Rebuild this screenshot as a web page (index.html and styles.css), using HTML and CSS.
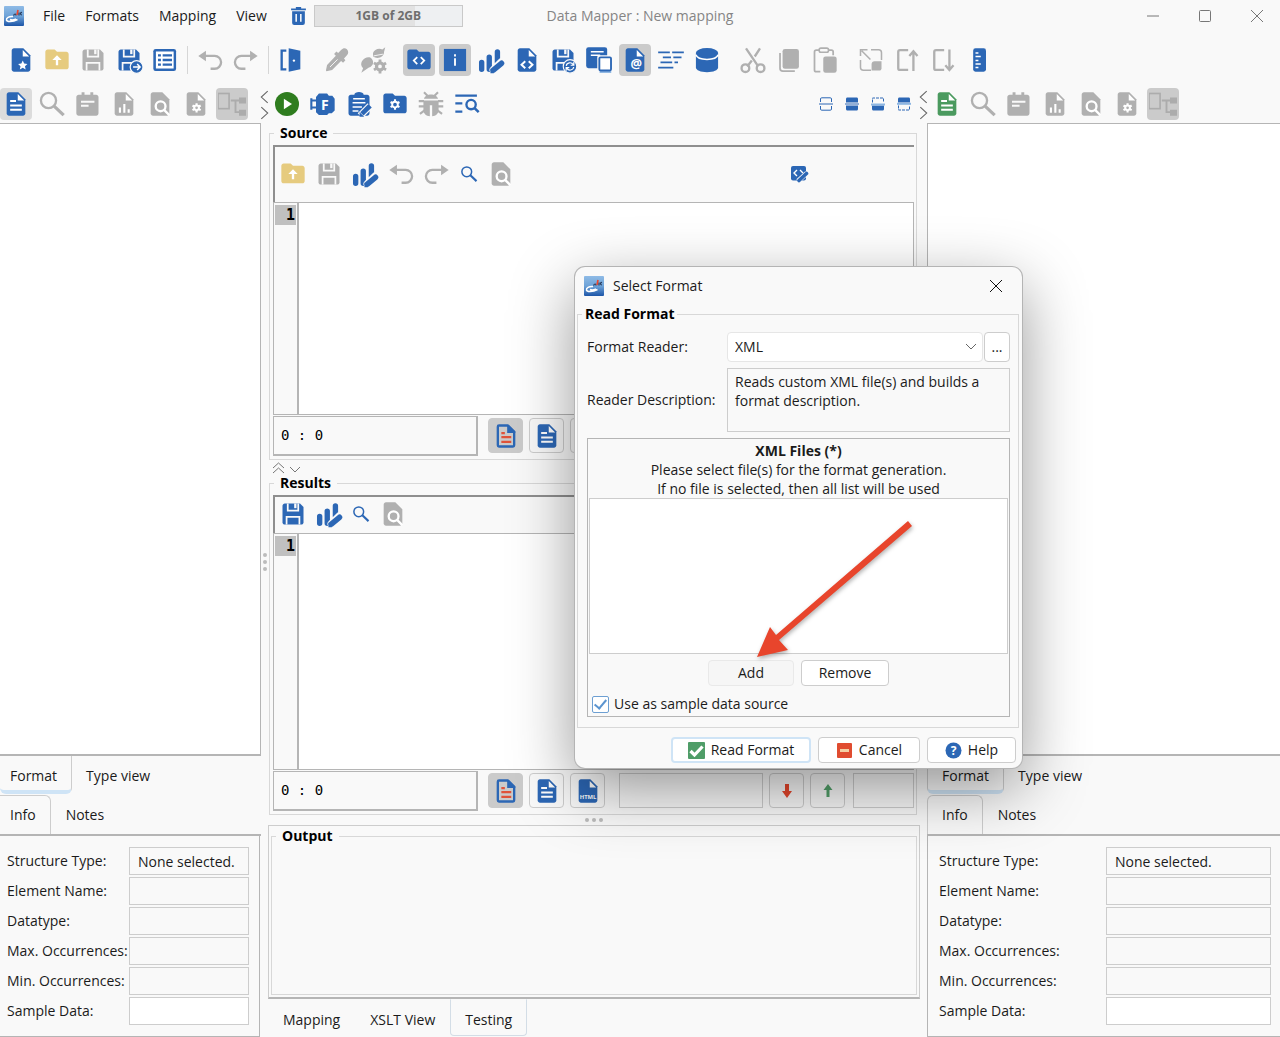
FILE: index.html
```html
<!DOCTYPE html>
<html lang="en">
<head>
    <meta charset="UTF-8">
    <meta name="viewport" content="width=device-width, initial-scale=1.0">
    <title>Data Mapper : New mapping</title>
    <link rel="stylesheet" href="styles.css">
</head>
<body>
    <!-- Icon sprite -->
    <svg class="sprite" aria-hidden="true">
        <defs>
            <linearGradient id="sky" x1="0" y1="0" x2="0" y2="1">
                <stop offset="0" stop-color="#8fbbe6"/>
                <stop offset=".5" stop-color="#6ea3d8"/>
                <stop offset="1" stop-color="#1d56a8"/>
            </linearGradient>
        </defs>
        <symbol id="logo" viewBox="0 0 20 20">
            <rect width="20" height="20" rx="1" fill="url(#sky)"/>
            <path d="M9 10.500c-4-.5-7 1.500-6.500 3.500s6 2 11-.5M6 13.500c1.500.8 4 .5 6-.5" fill="none" stroke="#fff" stroke-width="1.500"/>
            <path d="M9.500 9.500c1-2 2.500-2 2.500 0M15 6.500v3M18 6.500c-2-.5-2 2.500 0 2.500" fill="none" stroke="#2b3c5c" stroke-width="1.200"/>
            <path d="M14 4l-1 5" stroke="#e8452c" stroke-width="1.600"/>
        </symbol>
        <symbol id="trash" viewBox="0 0 14 17">
            <path d="M4.500 0h5v1.500H14V3H0V1.500h4.500zM1 4h12v11a2 2 0 0 1-2 2H3a2 2 0 0 1-2-2z" fill="currentColor"/>
            <path d="M4.800 6.500v7.500M9.200 6.500v7.500" stroke="#fff" stroke-width="1.400"/>
        </symbol>
        <symbol id="doc" viewBox="0 0 24 24">
            <path d="M14 2H6c-1.100 0-2 .9-2 2v16c0 1.100.9 2 2 2h12c1.100 0 2-.9 2-2V8z" fill="currentColor"/>
            <path d="M13.500 3.500V9H19z" fill="#fff"/>
        </symbol>
        <symbol id="doc-star" viewBox="0 0 24 24">
            <use href="#doc"/>
            <path d="M13.500 12.500l1.200 2.600 2.800.3-2.100 1.900.6 2.800-2.500-1.400-2.500 1.400.6-2.800-2.100-1.900 2.800-.3z" fill="#fff"/>
        </symbol>
        <symbol id="folder" viewBox="0 0 24 24">
            <path d="M10 3H4c-1.100 0-2 .9-2 2v13c0 1.100.9 2 2 2h16c1.100 0 2-.9 2-2V7c0-1.100-.9-2-2-2h-8z" fill="currentColor"/>
        </symbol>
        <symbol id="folder-up" viewBox="0 0 24 24">
            <use href="#folder"/>
            <path d="M12 8l4 4h-3v4.500h-2V12H8z" fill="#fff"/>
        </symbol>
        <symbol id="save" viewBox="0 0 24 24">
            <path d="M5 3h13l3 3v13c0 1.100-.9 2-2 2H5c-1.100 0-2-.9-2-2V5c0-1.100.9-2 2-2z" fill="currentColor"/>
            <path d="M7.500 3v6h9V3M6.500 21v-6.500h11V21" fill="none" stroke="#f9f9f9" stroke-width="1.500"/>
            <path d="M13 3h2v4h-2z" fill="#f9f9f9"/>
        </symbol>
        <symbol id="save-as" viewBox="0 0 24 24">
            <use href="#save"/>
            <circle cx="18.500" cy="18" r="5.500" fill="currentColor" stroke="#f9f9f9"/>
            <path d="M15.500 18h6M19 15.500l2.500 2.500-2.500 2.500" fill="none" stroke="#fff" stroke-width="1.300"/>
        </symbol>
        <symbol id="save-sync" viewBox="0 0 24 24">
            <use href="#save"/>
            <circle cx="18" cy="17.500" r="5.800" fill="currentColor" stroke="#f9f9f9"/>
            <path d="M14.800 17c.5-3 4.500-3.500 6-1M21.200 18c-.5 3-4.500 3.500-6 1M21.300 13.800v2.700h-2.700M14.700 21.200v-2.700h2.700" fill="none" stroke="#fff"/>
        </symbol>
        <symbol id="list-box" viewBox="0 0 24 24">
            <rect x="2" y="2.500" width="19.500" height="19" rx="2" fill="currentColor"/>
            <rect x="4.200" y="4.700" width="15.200" height="14.600" fill="#fff"/>
            <path d="M6 8h2.500M6 12h2.500M6 16h2.500M10 8h8M10 12h8M10 16h8" stroke="currentColor" stroke-width="2"/>
        </symbol>
        <symbol id="undo" viewBox="0 0 24 24">
            <path d="M5 8.500h11a5 5 0 0 1 0 11h-3.500" fill="none" stroke="currentColor" stroke-width="2"/>
            <path d="M8.500 4L2 8.500 8.500 13z" fill="currentColor"/>
        </symbol>
        <symbol id="redo" viewBox="0 0 24 24">
            <path d="M19 8.500H8a5 5 0 0 0 0 11h3.500" fill="none" stroke="currentColor" stroke-width="2"/>
            <path d="M15.500 4L22 8.500 15.500 13z" fill="currentColor"/>
        </symbol>
        <symbol id="door" viewBox="0 0 24 24">
            <path d="M10 2l10 2v16l-10 2z" fill="currentColor"/>
            <path d="M8 4H4v16h4" fill="none" stroke="currentColor" stroke-width="2"/>
            <circle cx="14.500" cy="12.500" r="1" fill="#fff"/>
        </symbol>
        <symbol id="dropper" viewBox="0 0 24 24">
            <path d="M20.500 2.800c-1.700-1.400-3.500-.8-4.800.5L13 6l-1.500-1.200-2 2 1.500 1.500-7.500 8L2.500 21l.5.700 4.800-1.200 7.700-7.700 1.700 1.500 2-2L18 10.800l2.700-3c1.200-1.500 1.300-3.500-.2-5z" fill="currentColor"/>
            <path d="M6 18l6.500-6.500" stroke="#f9f9f9" stroke-width=".8"/>
        </symbol>
        <symbol id="nuts" viewBox="0 0 24 24">
            <path d="M12 6c1-3 5-4.500 8-3l2.500-2-1 4c0 5-6 6.500-9.500 4zM2.500 13c2-3 5-4 7.500-3 3.500 3 2.500 7-1.500 8.500L2 23l1.500-4c-2-2-2-4-1-6z" fill="currentColor"/>
            <circle cx="18" cy="17.500" r="3" fill="none" stroke="currentColor" stroke-width="2.800"/>
            <path d="M18 11.500v2.500M18 21v2.500M12.800 14.500l2 1.200M21.200 19.200l2 1.200M12.800 20.500l2-1.200M21.200 15.800l2-1.200" stroke="currentColor" stroke-width="2.400"/>
            <path d="M12.500 8.500l8-1.500" stroke="#f9f9f9" stroke-width=".8"/>
        </symbol>
        <symbol id="folder-code" viewBox="0 0 24 24">
            <use href="#folder"/>
            <path d="M10.500 9.500L7.500 12.500l3 3M13.500 9.500l3 3-3 3" fill="none" stroke="#fff" stroke-width="1.500"/>
        </symbol>
        <symbol id="info" viewBox="0 0 24 24">
            <rect x="2.500" y="2.500" width="19" height="19" fill="currentColor"/>
            <path d="M12 7v2M12 10.500V17" stroke="#fff" stroke-width="1.600"/>
        </symbol>
        <symbol id="chart-pen" viewBox="0 0 24 24">
            <path d="M4 14v6M10.500 9.500v10.500M17.500 5v9" stroke="currentColor" stroke-width="4.600" stroke-linecap="round"/>
            <path d="M14 20.500L20.500 14" stroke="#f9f9f9" stroke-width="6.500" stroke-linecap="round"/>
            <path d="M14 20.700L21 14.800" stroke="currentColor" stroke-width="4.800" stroke-linecap="round"/>
            <path d="M11.500 19v4.300h3z" fill="currentColor"/>
        </symbol>
        <symbol id="doc-code" viewBox="0 0 24 24">
            <use href="#doc"/>
            <path d="M10.500 13L7.300 16l3.200 3M13.500 13l3.200 3-3.200 3" fill="none" stroke="#fff" stroke-width="1.700"/>
        </symbol>
        <symbol id="windows" viewBox="0 0 24 24">
            <rect x="1" y="1" width="18" height="18" rx="2" fill="currentColor"/>
            <path d="M5 5h11M5 8h8" stroke="#fff" stroke-width="1.300"/>
            <rect x="10.500" y="8" width="13.500" height="16" rx="1.500" fill="#f9f9f9"/>
            <path d="M12.500 22.300h10" stroke="#8db6e2" stroke-width="1.600"/>
            <rect x="12.300" y="9.700" width="10" height="11.300" rx="1" fill="#fff" stroke="currentColor" stroke-width="1.600"/>
        </symbol>
        <symbol id="lines" viewBox="0 0 24 24">
            <path d="M1 5.500h10M13 5.500h10M5 9.700h7M14 9.700h7M3 14h10M15 14h3M1 18.500h13" stroke="currentColor" stroke-width="1.500"/>
        </symbol>
        <symbol id="database" viewBox="0 0 24 24">
            <path d="M2.500 6v12.500c0 2.300 4 4 9.500 4s9.500-1.700 9.500-4V6z" fill="currentColor"/>
            <ellipse cx="12" cy="5.800" rx="9.500" ry="4" fill="currentColor"/>
            <path d="M2.500 7.500c1 3.200 5 4 9.500 4s8.500-.8 9.500-4" fill="none" stroke="#fff" stroke-width="1.300"/>
        </symbol>
        <symbol id="cut" viewBox="0 0 24 24">
            <path d="M6 2l10.500 15.500M18 2l-4.500 7M11 12.500l-4 5" stroke="currentColor" stroke-width="2"/>
            <circle cx="5.500" cy="19" r="3.300" fill="none" stroke="currentColor" stroke-width="2"/>
            <circle cx="18.500" cy="19" r="3.300" fill="none" stroke="currentColor" stroke-width="2"/>
        </symbol>
        <symbol id="copy" viewBox="0 0 24 24">
            <rect x="6.500" y="2.500" width="14" height="17" rx="2" fill="currentColor"/>
            <path d="M4.300 6v13c0 1.500 1 2.500 2.500 2.500H17" fill="none" stroke="currentColor" stroke-width="1.500"/>
        </symbol>
        <symbol id="paste" viewBox="0 0 24 24">
            <path d="M8 22H4.500c-1 0-1.500-.6-1.500-1.500V5c0-1 .5-1.500 1.500-1.500h13c1 0 1.500.5 1.500 1.500v3" fill="none" stroke="currentColor" stroke-width="1.500"/>
            <rect x="7" y="1.800" width="8" height="3.600" rx="1.500" fill="#f9f9f9" stroke="currentColor" stroke-width="1.400"/>
            <rect x="10.500" y="9" width="11.500" height="14" rx="2" fill="currentColor"/>
        </symbol>
        <symbol id="resize" viewBox="0 0 24 24">
            <path d="M3 8.500V3.200h6M12 3.200h6.500c1.500 0 2.500 1 2.500 2.500V12M3 12v6.500c0 1.500 1 2.300 2.500 2.300H12M4 4l7.500 7.500" fill="none" stroke="currentColor" stroke-width="1.300"/>
            <path d="M12.500 21v-5.500c0-1.500 1-2.500 2.500-2.500h6v6c0 1.500-.8 2-2 2z" fill="currentColor"/>
        </symbol>
        <symbol id="bracket-up" viewBox="0 0 24 24">
            <path d="M13 3.500H6c-1 0-1.500.5-1.500 1.500v14c0 1 .5 1.500 1.500 1.500h7M17.500 21.500V5M14 8.500l3.500-4 3.500 4" fill="none" stroke="currentColor" stroke-width="2"/>
        </symbol>
        <symbol id="bracket-down" viewBox="0 0 24 24">
            <path d="M13 3.500H6c-1 0-1.500.5-1.500 1.500v14c0 1 .5 1.500 1.500 1.500h7M17.500 3v16.500M14 16.500l3.500 4 3.500-4" fill="none" stroke="currentColor" stroke-width="2"/>
        </symbol>
        <symbol id="ruler" viewBox="0 0 24 24">
            <rect x="7" y="2" width="11" height="20" rx="2" fill="currentColor"/>
            <path d="M9 6h2.500M9 9h4.500M9 12.500h2.500M9 15.500h4.500M9 18.500h2.500" stroke="#fff" stroke-width="1.300"/>
        </symbol>
        <symbol id="doc-lines" viewBox="0 0 24 24">
            <use href="#doc"/>
            <path d="M7 9.500h5M7 13.200h10M7 17h10" stroke="#fff" stroke-width="1.700"/>
        </symbol>
        <symbol id="search" viewBox="0 0 24 24">
            <circle cx="9" cy="9" r="6.500" fill="none" stroke="currentColor" stroke-width="2"/>
            <path d="M13.800 13.800L22 21.500" stroke="currentColor" stroke-width="2.800"/>
        </symbol>
        <symbol id="note" viewBox="0 0 24 24">
            <path d="M2 6c0-1.100.9-2 2-2h15c1.100 0 2 .9 2 2v14c0 1.100-.9 2-2 2H4c-1.100 0-2-.9-2-2zM6.500 2H9v3H6.500zM14 2h2.500v3H14z" fill="currentColor"/>
            <path d="M6 10h11.500M6 13.500h6.500" stroke="#f9f9f9" stroke-width="1.700"/>
        </symbol>
        <symbol id="doc-chart" viewBox="0 0 24 24">
            <use href="#doc"/>
            <path d="M8.500 15v4.500M12.300 12v7.500M16 16.500v3" stroke="#fff" stroke-width="1.800"/>
        </symbol>
        <symbol id="doc-search" viewBox="0 0 24 24">
            <path d="M14 2H6c-1.100 0-2 .9-2 2v16c0 1.100.9 2 2 2h12c1.100 0 2-.9 2-2V8z" fill="currentColor"/>
            <circle cx="12.500" cy="14" r="4.200" fill="none" stroke="#fff" stroke-width="2"/>
            <path d="M15.500 17l4.500 4.500" stroke="#fff" stroke-width="2"/>
        </symbol>
        <symbol id="doc-gear" viewBox="0 0 24 24">
            <use href="#doc"/>
            <path d="M12.500 11.300v8M9 13.300l7 4M16 13.300l-7 4" stroke="#fff" stroke-width="1.800"/>
            <circle cx="12.500" cy="15.300" r="2" fill="currentColor" stroke="#fff" stroke-width="1.700"/>
        </symbol>
        <symbol id="tree" viewBox="0 0 24 24">
            <rect x="0" y="3" width="9.500" height="13" fill="none" stroke="currentColor" stroke-width="1.400"/>
            <path d="M11 9h10M15 9v10h6" fill="none" stroke="currentColor" stroke-width="1.600"/>
            <path d="M18 6.500h6.500v5H18zM18 17h6.500v5H18z" fill="currentColor"/>
        </symbol>
        <symbol id="play" viewBox="0 0 24 24">
            <circle cx="12" cy="12" r="10.300" fill="currentColor"/>
            <path d="M9.300 7.500v9l7-4.500z" fill="#fff"/>
        </symbol>
        <symbol id="clipboard-pen" viewBox="0 0 24 24">
            <path d="M5 4h3c0-3 8-3 8 0h3c1.100 0 2 .9 2 2v14c0 1.100-.9 2-2 2H5c-1.100 0-2-.9-2-2V6c0-1.100.9-2 2-2z" fill="currentColor"/>
            <path d="M7 7.500h10M6.500 11h11M6.500 14.500h8M6.500 18h5" stroke="#fff" stroke-width="1.300"/>
            <path d="M13 22l8.500-8.500" stroke="#f9f9f9" stroke-width="6"/>
            <path d="M14.500 20.500l7-7" stroke="currentColor" stroke-width="4"/>
            <path d="M12.500 19v4h4z" fill="currentColor"/>
        </symbol>
        <symbol id="folder-gear" viewBox="0 0 24 24">
            <use href="#folder"/>
            <path d="M12 8v9M8.200 10.300l7.600 4.400M15.800 10.300l-7.600 4.400" stroke="#fff" stroke-width="1.800"/>
            <circle cx="12" cy="12.500" r="2.400" fill="currentColor" stroke="#fff" stroke-width="1.600"/>
        </symbol>
        <symbol id="bug" viewBox="0 0 24 24">
            <path d="M6 7.500c1-5 11-5 12 0zM5.500 9h13v8c0 3.500-2.500 5.500-5.500 5.500V13h-2v9.500c-3 0-5.500-2-5.500-5.500z" fill="currentColor"/>
            <path d="M6 2l3 3M18 2l-3 3M1.500 9.500H6M18 9.500h4.500M1.500 14H6M18 14h4.500M2.500 20.500l4-3M21.500 20.500l-4-3" stroke="currentColor" stroke-width="1.800"/>
        </symbol>
        <symbol id="list-search" viewBox="0 0 24 24">
            <path d="M2 4.800h18.500M2 11.500h6M2 18.500h6" stroke="currentColor" stroke-width="1.900"/>
            <circle cx="15.500" cy="12.500" r="4" fill="none" stroke="currentColor" stroke-width="2"/>
            <path d="M18.500 15.500l3.500 3.500" stroke="currentColor" stroke-width="2.200"/>
        </symbol>
        <symbol id="split-none" viewBox="0 0 16 16">
            <path d="M2.500 6V3c0-.8.4-1.200 1.200-1.200h8.600c.8 0 1.200.4 1.200 1.200v3M2.500 10v3c0 .8.4 1.200 1.200 1.200h8.600c.8 0 1.200-.4 1.200-1.200v-3M1 8h14" fill="none" stroke="currentColor"/>
        </symbol>
        <symbol id="split-both" viewBox="0 0 16 16">
            <path d="M2 6.500V3c0-.9.500-1.500 1.500-1.500h9c1 0 1.500.6 1.500 1.500v3.500zM2 9.500V13c0 .9.500 1.500 1.500 1.500h9c1 0 1.500-.6 1.500-1.500V9.500z" fill="currentColor"/>
            <path d="M1 8h14" stroke="currentColor"/>
        </symbol>
        <symbol id="split-bottom" viewBox="0 0 16 16">
            <path d="M2 9.500V13c0 .9.500 1.500 1.500 1.500h9c1 0 1.500-.6 1.500-1.500V9.500z" fill="currentColor"/>
            <path d="M2.500 6.500V2h11v4.500" fill="none" stroke="currentColor" stroke-dasharray="3 1"/>
            <path d="M1 8.500h14" stroke="#8db6e2" stroke-width="2"/>
        </symbol>
        <symbol id="split-top" viewBox="0 0 16 16">
            <path d="M2 6.500V3c0-.9.500-1.500 1.500-1.500h9c1 0 1.500.6 1.500 1.500v3.500z" fill="currentColor"/>
            <path d="M2.500 9.500V14h11V9.500" fill="none" stroke="currentColor" stroke-dasharray="3 1"/>
            <path d="M1 7.800h14" stroke="#8db6e2" stroke-width="2"/>
        </symbol>
        <symbol id="code-edit" viewBox="0 0 18 18">
            <rect x="0" y="1" width="15" height="14.500" rx="2" fill="currentColor"/>
            <path d="M6 5L3 8l3 3M9 5l3 3" fill="none" stroke="#fff" stroke-width="1.400"/>
            <path d="M7 16l9-8" stroke="#f9f9f9" stroke-width="5"/>
            <path d="M8 15.500L15.500 8.500" stroke="currentColor" stroke-width="3.600" stroke-linecap="round"/>
        </symbol>
        <symbol id="doc-out" viewBox="0 0 24 24">
            <path d="M13.500 3H6c-.6 0-1 .4-1 1v16c0 .6.400 1 1 1h12c.6 0 1-.4 1-1V8.500z" fill="none" stroke="#2c67b5" stroke-width="2"/>
            <path d="M13 2.500h1.500L20 8v1.500h-7z" fill="#2c67b5"/>
            <path d="M8 9.500h3M8 13h8.500M8 17h8.500" stroke="#e0533a" stroke-width="1.800"/>
        </symbol>
        <symbol id="arrow-down" viewBox="0 0 10 16">
            <path d="M3 1h4v7h3l-5 7-5-7h3z" fill="#e8472c"/>
        </symbol>
        <symbol id="arrow-up" viewBox="0 0 10 16">
            <path d="M3.500 14h3V7h3L5 1 .5 7h3z" fill="#53a16a"/>
        </symbol>
    </svg>

    <header class="titlebar">
        <div class="titlebar-left">
            <svg class="logo"><use href="#logo"/></svg>
            <nav class="menu">
                <button type="button">File</button>
                <button type="button">Formats</button>
                <button type="button">Mapping</button>
                <button type="button">View</button>
            </nav>
            <button type="button" class="gc-button" aria-label="Free memory"><svg><use href="#trash"/></svg></button>
            <div class="memory">1GB of 2GB</div>
        </div>
        <div class="titlebar-title">Data Mapper : New mapping</div>
        <div class="window-controls">
            <button type="button" aria-label="Minimize"><svg viewBox="0 0 14 14"><path d="M1 7h12"/></svg></button>
            <button type="button" aria-label="Maximize"><svg viewBox="0 0 14 14"><rect x="1.500" y="1.500" width="11" height="11" rx="1"/></svg></button>
            <button type="button" aria-label="Close"><svg viewBox="0 0 14 14"><path d="M1 1l12 12M13 1L1 13"/></svg></button>
        </div>
    </header>

    <div class="toolbar toolbar-main">
        <div class="group">
            <button type="button" class="tool" aria-label="New"><svg><use href="#doc-star"/></svg></button>
            <button type="button" class="tool yellow" aria-label="Open"><svg><use href="#folder-up"/></svg></button>
            <button type="button" class="tool off" aria-label="Save"><svg><use href="#save"/></svg></button>
            <button type="button" class="tool" aria-label="Save as"><svg><use href="#save-as"/></svg></button>
            <button type="button" class="tool" aria-label="Properties"><svg><use href="#list-box"/></svg></button>
            <span class="separator"></span>
            <button type="button" class="tool off" aria-label="Undo"><svg><use href="#undo"/></svg></button>
            <button type="button" class="tool off" aria-label="Redo"><svg><use href="#redo"/></svg></button>
            <span class="separator"></span>
            <button type="button" class="tool" aria-label="Exit"><svg><use href="#door"/></svg></button>
        </div>
        <div class="group">
            <button type="button" class="tool off" aria-label="Pick"><svg><use href="#dropper"/></svg></button>
            <button type="button" class="tool off" aria-label="Auto map"><svg><use href="#nuts"/></svg></button>
        </div>
        <div class="group">
            <button type="button" class="tool active" aria-label="Code folder"><svg><use href="#folder-code"/></svg></button>
            <button type="button" class="tool active" aria-label="Info"><svg><use href="#info"/></svg></button>
            <button type="button" class="tool" aria-label="Edit chart"><svg><use href="#chart-pen"/></svg></button>
            <button type="button" class="tool" aria-label="Code file"><svg><use href="#doc-code"/></svg></button>
            <button type="button" class="tool" aria-label="Save and sync"><svg><use href="#save-sync"/></svg></button>
            <button type="button" class="tool" aria-label="Windows"><svg><use href="#windows"/></svg></button>
            <button type="button" class="tool active" aria-label="Attributes"><svg viewBox="0 0 24 24"><use href="#doc"/><text class="icon-text" x="13" y="19" font-size="11">@</text></svg></button>
            <button type="button" class="tool" aria-label="Lines"><svg><use href="#lines"/></svg></button>
            <button type="button" class="tool" aria-label="Database"><svg><use href="#database"/></svg></button>
        </div>
        <div class="group">
            <button type="button" class="tool off" aria-label="Cut"><svg><use href="#cut"/></svg></button>
            <button type="button" class="tool off" aria-label="Copy"><svg><use href="#copy"/></svg></button>
            <button type="button" class="tool off" aria-label="Paste"><svg><use href="#paste"/></svg></button>
        </div>
        <div class="group">
            <button type="button" class="tool off" aria-label="Resize"><svg><use href="#resize"/></svg></button>
            <button type="button" class="tool off" aria-label="Move up"><svg><use href="#bracket-up"/></svg></button>
            <button type="button" class="tool off" aria-label="Move down"><svg><use href="#bracket-down"/></svg></button>
            <button type="button" class="tool" aria-label="Ruler"><svg><use href="#ruler"/></svg></button>
        </div>
    </div>

    <main class="workspace">
        <!-- Source format -->
        <section class="side side-left">
            <div class="toolbar toolbar-side">
                <button type="button" class="tool pressed" aria-label="Format"><svg><use href="#doc-lines"/></svg></button>
                <button type="button" class="tool off" aria-label="Search"><svg><use href="#search"/></svg></button>
                <button type="button" class="tool off" aria-label="Note"><svg><use href="#note"/></svg></button>
                <button type="button" class="tool off" aria-label="Report"><svg><use href="#doc-chart"/></svg></button>
                <button type="button" class="tool off" aria-label="Preview"><svg><use href="#doc-search"/></svg></button>
                <button type="button" class="tool off" aria-label="Settings"><svg><use href="#doc-gear"/></svg></button>
                <button type="button" class="tool off active" aria-label="Tree"><svg><use href="#tree"/></svg></button>
            </div>
            <div class="tree-view"></div>
            <div class="tabs tabs-view">
                <button type="button" class="tab selected">Format</button>
                <button type="button" class="tab">Type view</button>
            </div>
            <div class="tabs tabs-info">
                <button type="button" class="tab selected">Info</button>
                <button type="button" class="tab">Notes</button>
            </div>
            <form class="info-form">
                <label for="l-structure">Structure Type:</label>
                <input id="l-structure" type="text" value="None selected." readonly>
                <label for="l-element">Element Name:</label>
                <input id="l-element" type="text" readonly>
                <label for="l-datatype">Datatype:</label>
                <input id="l-datatype" type="text" readonly>
                <label for="l-max">Max. Occurrences:</label>
                <input id="l-max" type="text" readonly>
                <label for="l-min">Min. Occurrences:</label>
                <input id="l-min" type="text" readonly>
                <label for="l-sample">Sample Data:</label>
                <input id="l-sample" type="text">
            </form>
        </section>

        <div class="divider">
            <button type="button" class="collapse" aria-label="Collapse left"><svg viewBox="0 0 8 30"><path d="M7 3L1 8.500 7 14M1 18l6 5.500L1 29"/></svg></button>
            <span class="grip grip-vertical"><i></i><i></i><i></i></span>
        </div>

        <section class="center">
            <div class="toolbar toolbar-side">
                <button type="button" class="tool green" aria-label="Run"><svg><use href="#play"/></svg></button>
                <button type="button" class="tool" aria-label="Function"><svg viewBox="0 0 24 24"><path d="M6 6l2.500-3h7l1.500 2h3L22 7.500v10L19.500 20H17l-1.500 1.500h-7L6 19z" fill="currentColor"/><path d="M2 7v10M2 9h5M2 15h5" stroke="currentColor" stroke-width="1.800"/><text class="icon-text" x="13.500" y="17" font-size="12">F</text></svg></button>
                <button type="button" class="tool" aria-label="Edit"><svg><use href="#clipboard-pen"/></svg></button>
                <button type="button" class="tool" aria-label="Folder settings"><svg><use href="#folder-gear"/></svg></button>
                <button type="button" class="tool off" aria-label="Debug"><svg><use href="#bug"/></svg></button>
                <button type="button" class="tool" aria-label="Find in list"><svg><use href="#list-search"/></svg></button>
                <div class="split-tools">
                    <button type="button" aria-label="Split none"><svg><use href="#split-none"/></svg></button>
                    <button type="button" aria-label="Split both"><svg><use href="#split-both"/></svg></button>
                    <button type="button" aria-label="Split bottom"><svg><use href="#split-bottom"/></svg></button>
                    <button type="button" aria-label="Split top"><svg><use href="#split-top"/></svg></button>
                </div>
            </div>

            <fieldset class="pane pane-source">
                <legend>Source</legend>
                <div class="toolbar pane-toolbar">
                    <button type="button" class="tool yellow" aria-label="Open source"><svg><use href="#folder-up"/></svg></button>
                    <button type="button" class="tool off" aria-label="Save source"><svg><use href="#save"/></svg></button>
                    <button type="button" class="tool" aria-label="Format source"><svg><use href="#chart-pen"/></svg></button>
                    <button type="button" class="tool off" aria-label="Undo"><svg><use href="#undo"/></svg></button>
                    <button type="button" class="tool off" aria-label="Redo"><svg><use href="#redo"/></svg></button>
                    <button type="button" class="tool small" aria-label="Find"><svg><use href="#search"/></svg></button>
                    <button type="button" class="tool off" aria-label="Preview"><svg><use href="#doc-search"/></svg></button>
                    <button type="button" class="tool small code-edit" aria-label="Edit code"><svg><use href="#code-edit"/></svg></button>
                </div>
                <div class="editor">
                    <div class="gutter"><span>1</span></div>
                    <textarea class="code" aria-label="Source text"></textarea>
                </div>
                <div class="status">
                    <output class="caret">0 : 0</output>
                    <button type="button" class="mode on" aria-label="Formatted"><svg><use href="#doc-out"/></svg></button>
                    <button type="button" class="mode" aria-label="Text"><svg><use href="#doc-lines"/></svg></button>
                    <button type="button" class="mode" aria-label="HTML"><svg><use href="#doc"/></svg></button>
                </div>
            </fieldset>

            <div class="pane-split">
                <button type="button" aria-label="Collapse panes"><svg viewBox="0 0 30 14"><path d="M1 7l5.500-5L12 7M1 12l5.500-5 5.500 5M18 6l5 5 5-5"/></svg></button>
            </div>

            <fieldset class="pane pane-results">
                <legend>Results</legend>
                <div class="toolbar pane-toolbar">
                    <button type="button" class="tool" aria-label="Save results"><svg><use href="#save"/></svg></button>
                    <button type="button" class="tool" aria-label="Format results"><svg><use href="#chart-pen"/></svg></button>
                    <button type="button" class="tool small" aria-label="Find"><svg><use href="#search"/></svg></button>
                    <button type="button" class="tool off" aria-label="Preview"><svg><use href="#doc-search"/></svg></button>
                </div>
                <div class="editor">
                    <div class="gutter"><span>1</span></div>
                    <textarea class="code" aria-label="Results text"></textarea>
                </div>
                <div class="status">
                    <output class="caret">0 : 0</output>
                    <button type="button" class="mode on" aria-label="Formatted"><svg><use href="#doc-out"/></svg></button>
                    <button type="button" class="mode" aria-label="Text"><svg><use href="#doc-lines"/></svg></button>
                    <button type="button" class="mode" aria-label="HTML"><svg viewBox="0 0 24 24"><use href="#doc"/><text class="icon-text" x="12" y="19" font-size="5">HTML</text></svg></button>
                    <input type="text" class="find-text" aria-label="Find text">
                    <button type="button" class="mode arrow" aria-label="Next"><svg><use href="#arrow-down"/></svg></button>
                    <button type="button" class="mode arrow" aria-label="Previous"><svg><use href="#arrow-up"/></svg></button>
                    <output class="match-count"></output>
                </div>
            </fieldset>

            <span class="grip grip-horizontal"><i></i><i></i><i></i></span>

            <div class="output-box">
                <fieldset class="output">
                    <legend>Output</legend>
                </fieldset>
            </div>

            <div class="tabs tabs-bottom">
                <button type="button" class="tab">Mapping</button>
                <button type="button" class="tab">XSLT View</button>
                <button type="button" class="tab selected">Testing</button>
            </div>
        </section>

        <div class="divider">
            <button type="button" class="collapse" aria-label="Collapse right"><svg viewBox="0 0 8 30"><path d="M7 3L1 8.500 7 14M1 18l6 5.500L1 29"/></svg></button>
        </div>

        <!-- Target format -->
        <section class="side side-right">
            <div class="toolbar toolbar-side">
                <button type="button" class="tool target" aria-label="Format"><svg><use href="#doc-lines"/></svg></button>
                <button type="button" class="tool off" aria-label="Search"><svg><use href="#search"/></svg></button>
                <button type="button" class="tool off" aria-label="Note"><svg><use href="#note"/></svg></button>
                <button type="button" class="tool off" aria-label="Report"><svg><use href="#doc-chart"/></svg></button>
                <button type="button" class="tool off" aria-label="Preview"><svg><use href="#doc-search"/></svg></button>
                <button type="button" class="tool off" aria-label="Settings"><svg><use href="#doc-gear"/></svg></button>
                <button type="button" class="tool off active" aria-label="Tree"><svg><use href="#tree"/></svg></button>
            </div>
            <div class="tree-view"></div>
            <div class="tabs tabs-view">
                <button type="button" class="tab selected">Format</button>
                <button type="button" class="tab">Type view</button>
            </div>
            <div class="tabs tabs-info">
                <button type="button" class="tab selected">Info</button>
                <button type="button" class="tab">Notes</button>
            </div>
            <form class="info-form">
                <label for="r-structure">Structure Type:</label>
                <input id="r-structure" type="text" value="None selected." readonly>
                <label for="r-element">Element Name:</label>
                <input id="r-element" type="text" readonly>
                <label for="r-datatype">Datatype:</label>
                <input id="r-datatype" type="text" readonly>
                <label for="r-max">Max. Occurrences:</label>
                <input id="r-max" type="text" readonly>
                <label for="r-min">Min. Occurrences:</label>
                <input id="r-min" type="text" readonly>
                <label for="r-sample">Sample Data:</label>
                <input id="r-sample" type="text">
            </form>
        </section>
    </main>

    <!-- Select Format dialog -->
    <div class="dialog" role="dialog" aria-labelledby="dialog-title">
        <div class="dialog-header">
            <svg class="logo"><use href="#logo"/></svg>
            <h1 id="dialog-title">Select Format</h1>
            <button type="button" class="dialog-close" aria-label="Close"><svg viewBox="0 0 14 14"><path d="M1 1l12 12M13 1L1 13"/></svg></button>
        </div>
        <fieldset class="read-format">
            <legend>Read Format</legend>
            <div class="reader-grid">
                <label for="reader">Format Reader:</label>
                <div class="reader-row">
                    <div class="select-wrap">
                        <select id="reader"><option>XML</option></select>
                        <svg viewBox="0 0 12 8"><path d="M1 1l5 5 5-5"/></svg>
                    </div>
                    <button type="button" class="btn btn-more" aria-label="More">...</button>
                </div>
                <label for="description">Reader Description:</label>
                <textarea id="description" readonly>Reads custom XML file(s) and builds a format description.</textarea>
            </div>
            <div class="files">
                <div class="files-head">
                    <b>XML Files (*)</b>
                    <p>Please select file(s) for the format generation.</p>
                    <p>If no file is selected, then all list will be used</p>
                </div>
                <div class="files-list"></div>
                <div class="files-actions">
                    <button type="button" class="btn btn-add">Add</button>
                    <button type="button" class="btn btn-remove">Remove</button>
                </div>
                <label class="sample-check"><input type="checkbox" checked>Use as sample data source</label>
            </div>
        </fieldset>
        <div class="dialog-footer">
            <button type="button" class="btn btn-read">
                <svg viewBox="0 0 17 17"><rect width="17" height="17" rx="1" fill="#4f9d68"/><path d="M2.500 9l4 4L14.500 4.500" fill="none" stroke="#fff" stroke-width="3.200"/></svg>
                Read Format
            </button>
            <button type="button" class="btn btn-cancel">
                <svg viewBox="0 0 17 17"><rect x="1" y="1" width="15" height="15" rx="1" fill="#e04c30"/><path d="M4 8.500h9" stroke="#f4cfa4" stroke-width="3"/></svg>
                Cancel
            </button>
            <button type="button" class="btn btn-help">
                <svg viewBox="0 0 17 17"><circle cx="8.500" cy="8.500" r="8" fill="#2c67b5"/><text class="icon-text" x="8.500" y="13" font-size="12">?</text></svg>
                Help
            </button>
        </div>
        <svg class="pointer" viewBox="0 0 160 140"><path d="M155 1l4 5L26 120l9 10-31 7 13-30 6 8z" fill="#e8452c"/></svg>
    </div>
</body>
</html>
```
FILE: styles.css
```css
:root {
    --bg: #f9f9f9;
    --blue: #2c67b5;
    --gray: #b0b0b0;
    --line: #cdcdcd;
    --line-dark: #b5b5b5;
    --text: #1b1b1b;
    --focus: #cfe4f6;
}

* {
    box-sizing: border-box;
}

body {
    margin: 0;
    height: 100vh;
    display: flex;
    flex-direction: column;
    overflow: hidden;
    position: relative;
    background-color: var(--bg);
    color: var(--text);
    font-family: "Open Sans", "Noto Sans", sans-serif;
    font-size: 14px;
    line-height: 20px;
}

button,
input,
select,
textarea {
    font: inherit;
    color: inherit;
    margin: 0;
}

button {
    padding: 0;
    border: none;
    background: none;
    white-space: nowrap;
}

svg {
    display: block;
    flex: none;
}

h1,
p {
    margin: 0;
}

fieldset {
    margin: 0;
    min-width: 0;
    border: 1px solid #d8d8d8;
}

legend {
    font-weight: 700;
    color: #000;
}

.sprite {
    position: absolute;
    width: 0;
    height: 0;
}

.icon-text {
    fill: #fff;
    font-weight: 700;
    text-anchor: middle;
}

.logo {
    width: 20px;
    height: 20px;
}

/* Title bar */
.titlebar {
    flex: none;
    display: grid;
    grid-template-columns: 1fr auto 1fr;
    align-items: center;
    height: 32px;
}

.titlebar-left {
    display: flex;
    align-items: center;
    padding-left: 4px;
}

.menu {
    display: flex;
    gap: 20px;
    margin: 0 24px 0 19px;
}

.gc-button svg {
    width: 15px;
    height: 18px;
    color: var(--blue);
}

.memory {
    width: 149px;
    height: 22px;
    margin-left: 8px;
    border: 1px solid #c9c9c9;
    background: linear-gradient(to right, #e2e2e2 68%, #eef0f2 68%);
    color: #6e6e6e;
    font-size: 12px;
    font-weight: 700;
    text-align: center;
}

.titlebar-title {
    color: #858585;
}

.window-controls {
    display: flex;
    justify-content: flex-end;
}

.window-controls button {
    width: 52px;
    height: 32px;
    display: grid;
    place-items: center;
}

.window-controls button:last-child {
    width: 46px;
    margin-left: 3px;
}

.window-controls svg,
.dialog-close svg {
    width: 14px;
    height: 14px;
    fill: none;
    stroke: #777;
}

/* Toolbars */
.toolbar {
    flex: none;
    display: flex;
    align-items: center;
    gap: 4px;
}

.toolbar-main {
    gap: 14px;
    padding: 12px 5px 6px;
}

.toolbar-side {
    height: 41px;
    padding-top: 3px;
}

.group {
    display: flex;
    gap: 4px;
}

.separator {
    width: 1px;
    height: 28px;
    margin: 2px;
    background-color: #d6d6d6;
}

.tool {
    width: 32px;
    height: 32px;
    display: grid;
    place-items: center;
    border-radius: 4px;
    color: var(--blue);
}

.tool svg {
    width: 28px;
    height: 28px;
}

.tool.small {
    width: 24px;
}

.tool.small svg {
    width: 18px;
    height: 18px;
}

.tool.off {
    color: var(--gray);
}

.tool.yellow {
    color: #e6cb7f;
}

.tool.green {
    color: #2f7d1f;
}

.tool.target {
    color: #4b9a5f;
}

.tool.active {
    background-color: #cbcbcb;
}

.tool.active.off {
    color: #acacac;
}

.tool.pressed {
    background-color: #dcdcdc;
}

/* Workspace */
.workspace {
    flex: 1;
    min-height: 0;
    display: grid;
    grid-template-columns: 261px 7px minmax(0, 1fr) 7px 353px;
}

.side,
.center {
    display: flex;
    flex-direction: column;
    min-width: 0;
    min-height: 0;
}

.side-right .toolbar-side {
    padding-left: 4px;
}

.tree-view {
    flex: 1;
    background-color: #fff;
    border: solid var(--line-dark);
    border-width: 1px 1px 2px 0;
}

.side-right .tree-view {
    border-width: 1px 0 2px 1px;
}

.divider {
    position: relative;
    display: flex;
    flex-direction: column;
    align-items: center;
}

.collapse {
    margin-top: 6px;
}

.collapse svg {
    width: 9px;
    height: 32px;
    fill: none;
    stroke: #666;
}

.grip {
    display: flex;
    justify-content: center;
    align-items: center;
    gap: 3px;
}

.grip i {
    width: 4px;
    height: 4px;
    border-radius: 50%;
    background-color: #bcbcbc;
}

.grip-vertical {
    flex: 1;
    flex-direction: column;
    margin-bottom: 34px;
}

.grip-horizontal {
    flex: none;
    height: 10px;
}

/* Tabs */
.tabs {
    flex: none;
    display: flex;
}

.tab {
    padding: 0 14px;
    border: 1px solid transparent;
}

.tabs-view {
    height: 39px;
    padding-bottom: 1px;
}

.tabs-view .tab {
    padding-top: 5px;
    border-width: 0 0 4px;
}

.tabs-view .tab.selected {
    border: solid var(--line);
    border-width: 0 1px 0 0;
    border-bottom: 4px solid var(--focus);
    border-radius: 0 0 6px 6px;
}

.side-left .tab.selected {
    padding-left: 10px;
}

.side-right .tabs-view .tab.selected {
    border-width: 0 1px 4px 1px;
}

.tabs-info {
    height: 41px;
    border-bottom: 2px solid var(--line-dark);
}

.tabs-info .tab.selected {
    border: solid var(--line);
    border-width: 1px 1px 0 0;
    border-radius: 0 6px 0 0;
}

.side-right .tabs-info .tab.selected {
    border-left-width: 1px;
    border-radius: 6px 6px 0 0;
}

.tabs-bottom {
    height: 38px;
    padding-bottom: 1px;
}

.tabs-bottom .tab {
    padding-top: 4px;
}

.tabs-bottom .tab.selected {
    border-color: transparent #d3dde6 #d3dde6;
    border-radius: 0 0 4px 4px;
}

.tabs-bottom .tab.selected {
    border-left-color: #d3dde6;
}

/* Info form */
.info-form {
    flex: none;
    display: grid;
    grid-template-columns: 122px minmax(0, 1fr);
    row-gap: 2px;
    align-items: center;
    margin-right: 1px;
    padding: 11px 10px 11px 7px;
    border: solid var(--line-dark);
    border-width: 0 1px 1px 0;
}

.side-right .info-form {
    grid-template-columns: 167px minmax(0, 1fr);
    margin-right: 0;
    padding: 11px 9px 11px 11px;
    border-width: 0 0 1px 1px;
}

.info-form label {
    white-space: nowrap;
}

.info-form input {
    width: 100%;
    height: 28px;
    padding: 0 8px;
    border: 1px solid var(--line);
    background-color: #fff;
}

.info-form input:read-only {
    background-color: var(--bg);
}

/* Center panes */
.center .toolbar-side {
    padding-left: 3px;
    padding-right: 3px;
}

.split-tools {
    display: flex;
    margin-left: auto;
}

.split-tools button {
    width: 26px;
    height: 32px;
    display: grid;
    place-items: center;
}

.split-tools svg {
    width: 16px;
    height: 16px;
    color: var(--blue);
}

.pane {
    display: flex;
    flex-direction: column;
    margin: 0 3px 0 1px;
    padding: 2px 2px 3px 3px;
}

.pane-source {
    flex: 1 1 337px;
}

.pane-results {
    flex: 1 1 342px;
}

.pane legend,
.output legend {
    margin-left: 1px;
    padding: 0 6px;
}

.pane-toolbar {
    height: 38px;
    padding: 0 2px 2px;
    border: solid #8f8f8f;
    border-width: 2px 0 0 2px;
}

.pane-source .pane-toolbar {
    height: 57px;
}

.tool.code-edit {
    margin-left: auto;
    margin-right: 100px;
}

.editor {
    flex: 1;
    min-height: 0;
    display: flex;
    border: 1px solid var(--line-dark);
}

.gutter {
    flex: none;
    width: 25px;
    padding-top: 2px;
    border-right: 2px solid var(--line-dark);
}

.gutter span {
    display: block;
    margin: 0 1px;
    padding-right: 1px;
    background-color: #c0c0c0;
    color: #000;
    font: 700 15px/20px "DejaVu Sans Mono", monospace;
    text-align: right;
}

.code {
    flex: 1;
    min-width: 0;
    border: none;
    background-color: #fff;
    resize: none;
    outline: none;
}

.status {
    flex: none;
    display: flex;
    align-items: center;
    gap: 6px;
    height: 41px;
}

.caret {
    width: 205px;
    height: 40px;
    margin-right: 4px;
    padding-left: 7px;
    border: solid var(--line-dark);
    border-width: 1px 2px 2px 1px;
    color: #000;
    font: 14px/36px "DejaVu Sans Mono", monospace;
}

.mode {
    flex: none;
    width: 35px;
    height: 35px;
    display: grid;
    place-items: center;
    border: 1px solid var(--line);
    border-radius: 4px;
    color: var(--blue);
}

.mode svg {
    width: 28px;
    height: 28px;
}

.mode.on {
    border-color: #cbcbcb;
    background-color: #cbcbcb;
}

.mode.arrow svg {
    width: 10px;
    height: 16px;
}

.find-text {
    flex: 1;
    min-width: 0;
    height: 35px;
    margin-left: 8px;
    border: 1px solid var(--line);
    background-color: transparent;
}

.match-count {
    width: 61px;
    height: 35px;
    margin-left: 2px;
    border: 1px solid var(--line);
}

.pane-split {
    flex: none;
    height: 13px;
    padding-left: 4px;
}

.pane-split svg {
    width: 30px;
    height: 14px;
    fill: none;
    stroke: #777;
}

.output-box {
    flex: 1 1 174px;
    min-height: 0;
    display: flex;
    padding: 0 2px 2px;
    border: 1px solid var(--line);
    border-bottom: 2px solid var(--line-dark);
}

.output {
    flex: 1;
    padding: 0 3px;
}

/* Dialog */
.dialog {
    position: absolute;
    top: 267px;
    left: 575px;
    width: 447px;
    padding: 0 3px 5px 2px;
    border-radius: 10px;
    background-color: var(--bg);
    box-shadow: 0 0 0 1px #b4b4b4, 0 20px 64px rgba(0, 0, 0, 0.42);
}

.dialog-header {
    display: flex;
    align-items: center;
    gap: 9px;
    height: 37px;
    padding: 0 7px;
}

.dialog-header h1 {
    flex: 1;
    font-size: 14px;
    font-weight: 400;
}

.dialog-close {
    width: 32px;
    height: 32px;
    display: grid;
    place-items: center;
}

.dialog-close svg {
    stroke: #111;
}

.read-format {
    padding: 8px 8px 10px 9px;
}

.read-format legend {
    margin-left: -5px;
    padding: 0 3px;
}

.reader-grid {
    display: grid;
    grid-template-columns: 140px minmax(0, 1fr);
    row-gap: 6px;
    align-items: center;
}

.reader-row {
    display: flex;
    gap: 1px;
}

.select-wrap {
    position: relative;
    flex: 1;
}

.select-wrap select {
    width: 100%;
    height: 30px;
    padding: 0 7px;
    border: 1px solid #e6e6e6;
    border-radius: 4px;
    background-color: #fff;
    appearance: none;
}

.select-wrap svg {
    position: absolute;
    top: 11px;
    right: 6px;
    width: 12px;
    height: 8px;
    fill: none;
    stroke: #666;
    pointer-events: none;
}

#description {
    display: block;
    width: 100%;
    height: 64px;
    padding: 3px 7px;
    border: 1px solid var(--line);
    background-color: var(--bg);
    line-height: 19px;
    resize: none;
    outline: none;
}

.btn {
    display: flex;
    align-items: center;
    justify-content: center;
    gap: 6px;
    height: 26px;
    border: 1px solid var(--line);
    border-radius: 4px;
    background-color: #fff;
}

.btn svg {
    width: 17px;
    height: 17px;
}

.btn-more {
    width: 26px;
    height: 30px;
}

.files {
    margin-top: 6px;
    padding: 2px 1px;
    border: 1px solid var(--line-dark);
}

.files-head {
    text-align: center;
    line-height: 19px;
}

.files-list {
    height: 156px;
    border: 1px solid var(--line);
    background-color: #fff;
}

.files-actions {
    display: flex;
    justify-content: center;
    gap: 7px;
    margin: 6px 0 8px;
}

.btn-add {
    width: 86px;
    border-color: #e9e9e9;
    background-color: #f6f6f6;
}

.btn-remove {
    width: 88px;
}

.sample-check {
    display: flex;
    align-items: center;
    gap: 5px;
    padding-left: 3px;
}

.sample-check input {
    appearance: none;
    width: 17px;
    height: 17px;
    border: 1px solid #6d9fd2;
    border-radius: 2px;
    background-color: #fff;
    display: grid;
    place-items: center;
}

.sample-check input:checked::after {
    content: "";
    width: 5px;
    height: 10px;
    margin-bottom: 2px;
    border: solid #5b94cf;
    border-width: 0 2px 2px 0;
    transform: rotate(40deg);
}

.dialog-footer {
    display: flex;
    justify-content: flex-end;
    gap: 7px;
    padding: 9px 3px 0 0;
}

.btn-read {
    width: 140px;
    border: 2px solid var(--focus);
}

.btn-cancel {
    width: 102px;
}

.btn-help {
    width: 89px;
}

.pointer {
    position: absolute;
    top: 253px;
    left: 178px;
    width: 160px;
    height: 140px;
    filter: drop-shadow(1px 2px 2px rgba(0, 0, 0, 0.3));
    pointer-events: none;
}
```
